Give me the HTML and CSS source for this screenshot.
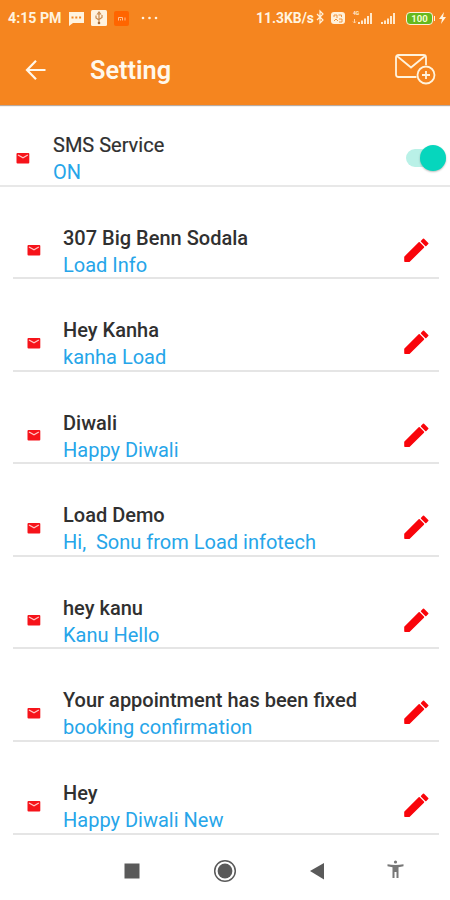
FILE: index.html
```html
<!DOCTYPE html>
<html lang="en">
<head>
<meta charset="utf-8">
<title>Setting</title>
<link rel="stylesheet" href="styles.css">
</head>
<body>
<svg class="defs" aria-hidden="true">
  <symbol id="mail" viewBox="0 0 14 12"><rect x=".5" y="1" width="12.800" height="10.500" rx="1" fill="#f6131a"/><path d="M2 3 7 5.800 11.800 3" fill="none" stroke="#ffc5c3" stroke-width="1.300"/></symbol>
  <symbol id="pencil" viewBox="0 0 26 26"><path d="M1 20 15.200 5.900 19.400 10.100 5.200 24.200H1zM17.600 4.200l1.900-1.900 4.200 4.200-1.900 1.900z" fill="#f9050b" stroke="#f9050b" stroke-width="1.600" stroke-linejoin="round"/></symbol>
</svg>
<header class="header">
  <div class="status">
    <span class="time">4:15 PM</span>
    <svg class="notices" width="94" height="18" viewBox="0 0 94 18">
      <path d="M1 3h15v11H5l-4 3z" fill="#fff3df"/><path d="M3.500 8.500h10" stroke="#f5851f" stroke-width="2" stroke-dasharray="2 1.800"/>
      <rect x="23" y="1" width="16" height="16" rx="1.500" fill="#fff3df"/><path d="M31 14V5m0 6-3-2V6.500m3 4 3-2V6M29.500 5 31 3l1.500 2z" fill="none" stroke="#c98a4e" stroke-width="1.200"/><circle cx="31" cy="14" r="1.300" fill="#a46b38"/>
      <rect x="46" y="2" width="15" height="15" rx="2" fill="#ff6500"/><path d="M50.500 11.500v-3h4v3m2.500-3v3m-4.500-1.500v1.500" fill="none" stroke="#ffc291"/>
      <g fill="#fff3df"><circle cx="75" cy="9" r="1.300"/><circle cx="81.500" cy="9" r="1.300"/><circle cx="88" cy="9" r="1.300"/></g>
    </svg>
    <span class="speed">11.3KB/s</span>
    <svg class="signals" width="92" height="20" viewBox="0 0 92 20" fill="none">
      <path d="m1 6 6 6-3 3V3l3 3-6 6" stroke="#fff0d9" stroke-width="1.200"/>
      <rect x="15" y="4" width="14" height="12" rx="3" fill="#fff0d9"/><path d="M18 9V7h3v3m1.500-3h3v2M18 13l2-2 2 2m1-2h3v3h-3" stroke="#f0943f"/>
      <path d="M42 14h2v2h-2zM45 12.500h2V16h-2zM48 10.500h2V16h-2zM51 8h2v8h-2zM54 5h2v11h-2zM65 14h2v2h-2zM68 12.500h2V16h-2zM71 10.500h2V16h-2zM74 8h2v8h-2zM77 5h2v11h-2z" fill="#ffe8cb"/>
      <text x="37" y="7" class="network">4G</text><path d="M38.500 11v4m-1.500-1.500 1.500 1.500 1.500-1.500" stroke="#ffd7aa"/>
    </svg>
    <span class="battery">100</span>
    <svg class="bolt" width="9" height="12" viewBox="0 0 9 12"><path d="M6 0 1 7h3l-1 5 5-7H5z" fill="#fff3df"/></svg>
  </div>
  <div class="appbar">
    <svg class="back" width="22" height="22" viewBox="0 0 22 22"><path d="M20.500 11H2M11 1.800 2 11l9 9.200" fill="none" stroke="#fff8ec" stroke-width="2.200"/></svg>
    <h1>Setting</h1>
    <svg class="add" width="42" height="32" viewBox="0 0 42 32" fill="none" stroke="#fff3dd" stroke-width="1.800"><path d="M22.500 24H4.500Q2 24 2 21.500V4.500Q2 2 4.500 2h25Q32 2 32 4.500V12M3 3l14 11.500L31 3"/><circle cx="32" cy="22" r="8.500"/><path d="M32 18v8M28 22h8"/></svg>
  </div>
</header>
<main>
  <section class="service"><svg class="mail"><use href="#mail"/></svg><div class="copy"><h2>SMS Service</h2><p>ON</p></div><span class="toggle"></span></section>
  <section class="row"><svg class="mail"><use href="#mail"/></svg><div class="copy"><h2>307 Big Benn Sodala</h2><p>Load Info</p></div><svg class="pencil"><use href="#pencil"/></svg></section>
  <section class="row"><svg class="mail"><use href="#mail"/></svg><div class="copy"><h2>Hey Kanha</h2><p>kanha Load</p></div><svg class="pencil"><use href="#pencil"/></svg></section>
  <section class="row"><svg class="mail"><use href="#mail"/></svg><div class="copy"><h2>Diwali</h2><p>Happy Diwali</p></div><svg class="pencil"><use href="#pencil"/></svg></section>
  <section class="row"><svg class="mail"><use href="#mail"/></svg><div class="copy"><h2>Load Demo</h2><p>Hi,&nbsp; Sonu from Load infotech</p></div><svg class="pencil"><use href="#pencil"/></svg></section>
  <section class="row"><svg class="mail"><use href="#mail"/></svg><div class="copy"><h2>hey kanu</h2><p>Kanu Hello</p></div><svg class="pencil"><use href="#pencil"/></svg></section>
  <section class="row"><svg class="mail"><use href="#mail"/></svg><div class="copy"><h2>Your appointment has been fixed</h2><p>booking confirmation</p></div><svg class="pencil"><use href="#pencil"/></svg></section>
  <section class="row"><svg class="mail"><use href="#mail"/></svg><div class="copy"><h2>Hey</h2><p>Happy Diwali New</p></div><svg class="pencil"><use href="#pencil"/></svg></section>
</main>
<nav class="nav">
  <svg width="24" height="24" viewBox="0 0 24 24"><rect x="4.500" y="4.500" width="15" height="15" fill="#5a5a5a"/></svg>
  <svg width="24" height="24" viewBox="0 0 24 24"><circle cx="12" cy="12" r="10.300" fill="none" stroke="#5a5a5a" stroke-width="1.500"/><circle cx="12" cy="12" r="7.400" fill="#5a5a5a"/></svg>
  <svg width="24" height="24" viewBox="0 0 24 24"><path d="M4 12 18 4v16.500z" fill="#5a5a5a"/></svg>
  <svg width="24" height="24" viewBox="0 0 24 24" fill="#777"><circle cx="11.500" cy="3" r="1.600"/><path d="M3.500 5.300q8 1.400 16 0v2l-5 .9V19h-2v-6h-2v6h-2V8.200l-5-.9z"/></svg>
</nav>
</body>
</html>
```
FILE: styles.css
```css
* { box-sizing: border-box; }
body { margin: 0; height: 900px; display: flex; flex-direction: column; overflow: hidden; background: #fff; font-family: Roboto, sans-serif; }
h1, h2, p { margin: 0; }
svg { display: block; flex: none; }
.defs { display: none; }
.header { height: 105px; flex: none; background: #f5851f; color: #fff8ec; box-shadow: 0 1px 1px #b9aaa0; }
.status { height: 36px; display: flex; align-items: center; padding: 0 3px 0 8px; font-size: 14px; font-weight: 700; white-space: nowrap; color: #fff3df; }
.time { width: 60px; font-size: 14.200px; }
.speed { width: 58px; margin-left: 94px; font-size: 13.900px; }
.signals { margin-left: 2px; }
.network { font: 700 5px Roboto, sans-serif; fill: #fff0d9; }
.battery { position: relative; width: 27px; height: 13px; margin-left: -2px; border: 1.500px solid #fff0d9; border-radius: 4px; background: #65b91e; color: #f4ffce; font-size: 9.500px; line-height: 11px; text-align: center; }
.battery::after { content: ""; position: absolute; right: -3px; top: 3px; width: 1.500px; height: 5px; background: #fff0d9; }
.bolt { margin-left: 5px; }
.appbar { height: 69px; display: flex; align-items: center; padding: 0 14px 0 25px; }
.back { margin-top: -1px; }
.appbar h1 { margin: 1px 0 0 43px; flex: 1; font-size: 25.300px; line-height: 30px; font-weight: 600; }
.add { margin-top: -3px; }
main { height: 737px; flex: none; }
.service { height: 81.500px; display: flex; padding-left: 16px; border-bottom: 2px solid #e8e8e8; }
.row { height: 92.600px; margin: 0 11px 0 13px; padding-left: 14px; display: flex; border-bottom: 2px solid #e5e5e5; }
.mail { width: 14px; height: 12px; }
.service .mail { margin-top: 47px; }
.row .mail { margin-top: 57.500px; }
.copy { flex: 1; white-space: nowrap; }
.service .copy { margin: 27px 0 0 23px; }
.row .copy { margin: 38px 0 0 22px; }
h2 { font-size: 20px; line-height: 27px; font-weight: 500; color: #303030; }
.service h2 { font-weight: 400; -webkit-text-stroke: .2px #303030; }
p { font-size: 20px; line-height: 27px; color: #26a5e9; }
.pencil { width: 26px; height: 26px; margin: 50px 9px 0 0; }
.toggle { position: relative; width: 40px; height: 18px; margin: 44px 4px 0 0; border-radius: 9px; background: #b9f1e7; }
.toggle::after { content: ""; position: absolute; right: 0; top: -4px; width: 26px; height: 26px; border-radius: 50%; background: #06d6bd; box-shadow: 0 1px 2px #0004; }
.nav { height: 58px; flex: none; display: flex; align-items: center; padding-left: 120px; gap: 69px; background: #fff; }
.nav svg:last-child { margin-left: -15px; }
```
